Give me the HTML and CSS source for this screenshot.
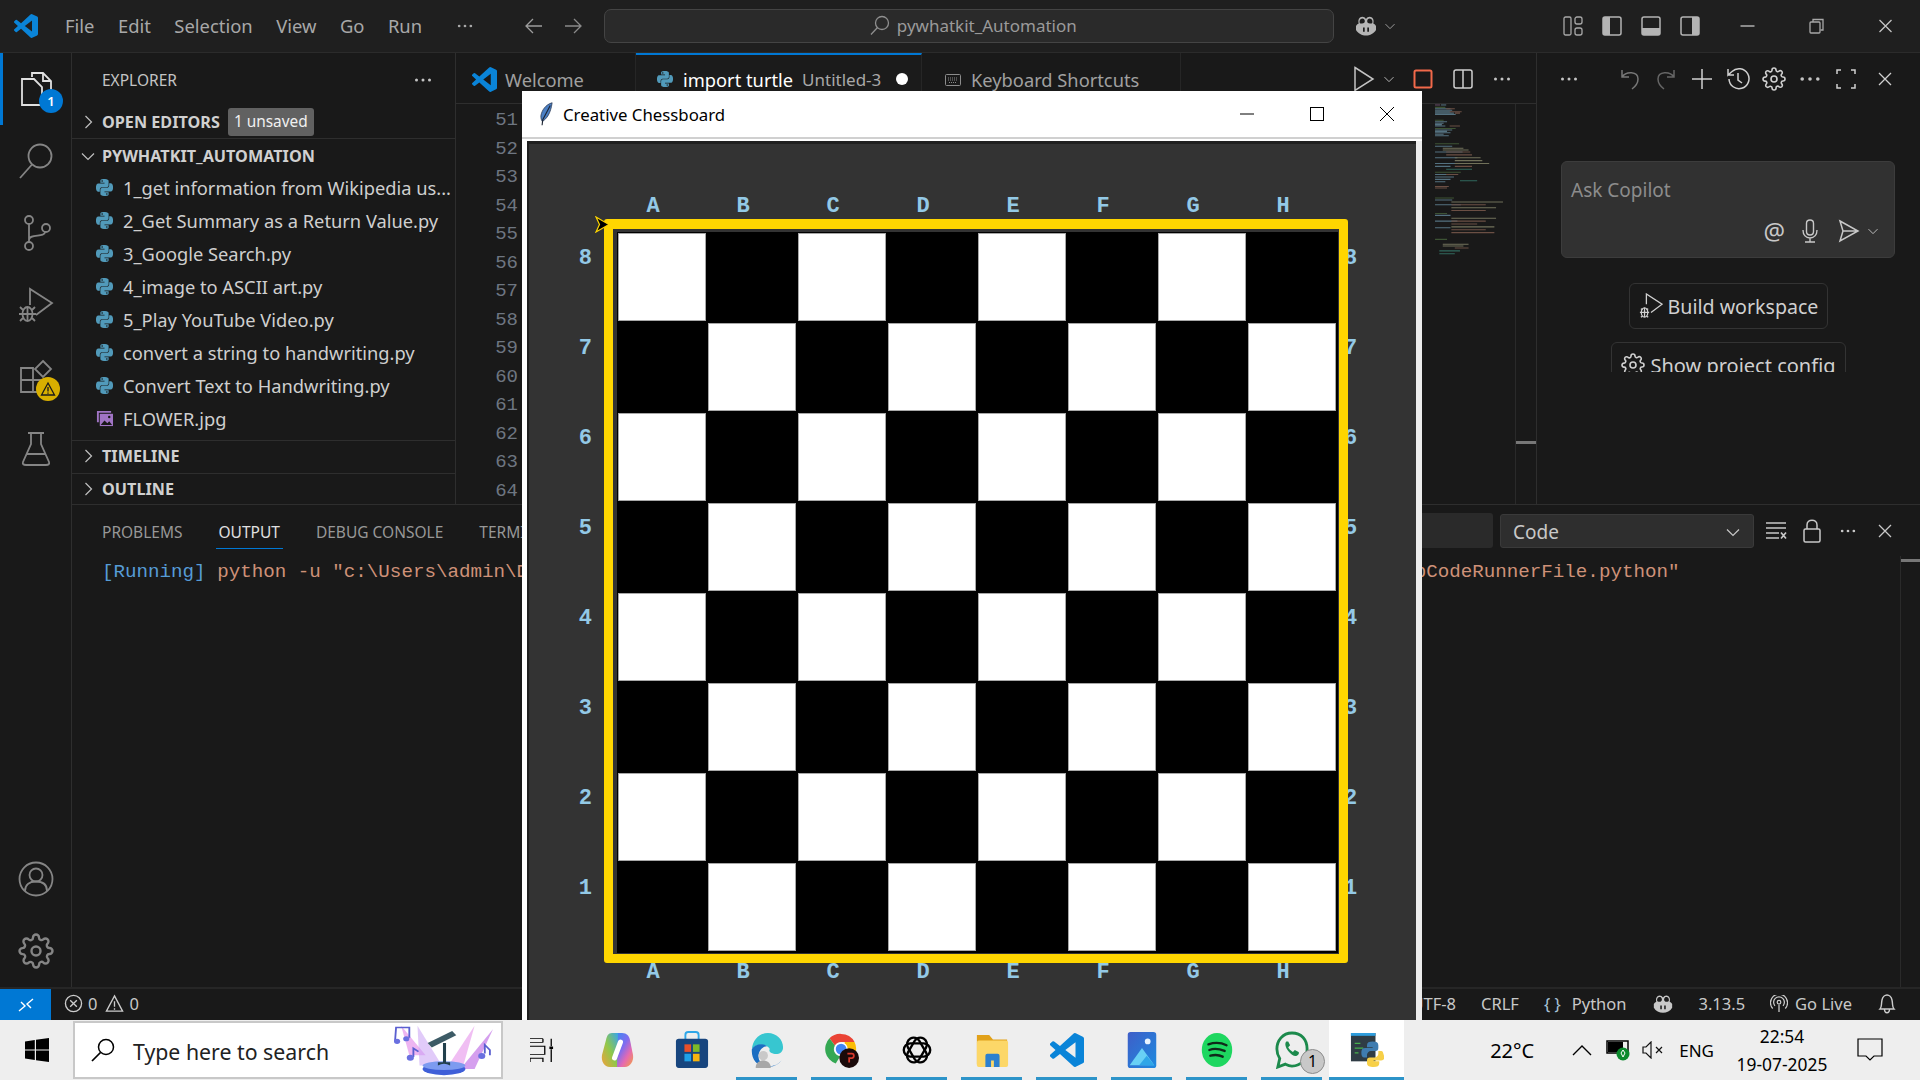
FILE: index.html
```html
<!DOCTYPE html>
<html lang="en">
<head>
  <meta charset="UTF-8" />
  <title>import turtle - pywhatkit_Automation</title>
  <link rel="stylesheet" href="styles.css">
</head>
<body>
  <svg class="defs" width="0" height="0">
    <symbol id="vscode" viewBox="0 0 24 24"><path fill="#0a84d8" d="M23.15 2.587L18.21.21a1.494 1.494 0 0 0-1.705.29l-9.46 8.63-4.12-3.128a.999.999 0 0 0-1.276.057L.327 7.261A1 1 0 0 0 .326 8.74L3.899 12 .326 15.26a1 1 0 0 0 .001 1.479L1.65 17.94a.999.999 0 0 0 1.276.057l4.12-3.128 9.46 8.63a1.492 1.492 0 0 0 1.704.29l4.942-2.377A1.5 1.5 0 0 0 24 20.06V3.939a1.5 1.5 0 0 0-.85-1.352zm-5.146 14.861L10.826 12l7.178-5.448v10.896z"/></symbol>
    <symbol id="python" viewBox="0 0 24 24"><path fill="#519aba" d="M14.25.18l.9.2.73.26.59.3.45.32.34.34.25.34.16.33.1.3.04.26.02.2-.01.13V8.5l-.05.63-.13.55-.21.46-.26.38-.3.31-.33.25-.35.19-.35.14-.33.1-.3.07-.26.04-.21.02H8.77l-.69.05-.59.14-.5.22-.41.27-.33.32-.27.35-.2.36-.15.37-.1.35-.07.32-.04.27-.02.21v3.06H3.17l-.21-.03-.28-.07-.32-.12-.35-.18-.36-.26-.36-.36-.35-.46-.32-.59-.28-.73-.21-.88-.14-1.05-.05-1.23.06-1.22.16-1.04.24-.87.32-.71.36-.57.4-.44.42-.33.42-.24.4-.16.36-.1.32-.05.24-.01h.16l.06.01h8.16v-.83H6.18l-.01-2.75-.02-.37.05-.34.11-.31.17-.28.25-.26.31-.23.38-.2.44-.18.51-.15.58-.12.64-.1.71-.06.77-.04.84-.02 1.27.05zm-6.3 1.98l-.23.33-.08.41.08.41.23.34.33.22.41.09.41-.09.33-.22.23-.34.08-.41-.08-.41-.23-.33-.33-.22-.41-.09-.41.09zm13.09 3.95l.28.06.32.12.35.18.36.27.36.35.35.47.32.59.28.73.21.88.14 1.04.05 1.23-.06 1.23-.16 1.04-.24.86-.32.71-.36.57-.4.45-.42.33-.42.24-.4.16-.36.09-.32.05-.24.02-.16-.01h-8.22v.82h5.84l.01 2.76.02.36-.05.34-.11.31-.17.29-.25.25-.31.24-.38.2-.44.17-.51.15-.58.13-.64.09-.71.07-.77.04-.84.01-1.27-.04-1.07-.14-.9-.2-.73-.25-.59-.3-.45-.33-.34-.34-.25-.34-.16-.33-.1-.3-.04-.25-.02-.2.01-.13v-5.34l.05-.64.13-.54.21-.46.26-.38.3-.32.33-.24.35-.2.35-.14.33-.1.3-.06.26-.04.21-.02.13-.01h5.84l.69-.05.59-.14.5-.21.41-.28.33-.32.27-.35.2-.36.15-.36.1-.35.07-.32.04-.28.02-.21V6.07h2.09l.14.01zm-6.47 14.25l-.23.33-.08.41.08.41.23.33.33.23.41.08.41-.08.33-.23.23-.33.08-.41-.08-.41-.23-.33-.33-.23-.41-.08-.41.08z"/></symbol>
    <symbol id="dots" viewBox="0 0 20 20"><g fill="currentColor"><circle cx="3.5" cy="10" r="1.5"/><circle cx="10" cy="10" r="1.5"/><circle cx="16.5" cy="10" r="1.5"/></g></symbol>
    <symbol id="chev-r" viewBox="0 0 16 16"><path d="M5.5 2l6 6-6 6" fill="none" stroke="currentColor" stroke-width="1.2"/></symbol>
    <symbol id="chev-d" viewBox="0 0 16 16"><path d="M2 5.5l6 6 6-6" fill="none" stroke="currentColor" stroke-width="1.2"/></symbol>
    <symbol id="close" viewBox="0 0 16 16"><path d="M2 2l12 12M14 2L2 14" fill="none" stroke="currentColor" stroke-width="1.3"/></symbol>
    <symbol id="gear" viewBox="0 0 24 24"><g fill="none" stroke="currentColor" stroke-width="1.6"><circle cx="12" cy="12" r="3"/><path d="M19.4 15a1.65 1.65 0 0 0 .33 1.82l.06.06a2 2 0 0 1 0 2.83 2 2 0 0 1-2.83 0l-.06-.06a1.65 1.65 0 0 0-1.82-.33 1.65 1.65 0 0 0-1 1.51V21a2 2 0 0 1-2 2 2 2 0 0 1-2-2v-.09A1.65 1.65 0 0 0 9 19.4a1.65 1.65 0 0 0-1.82.33l-.06.06a2 2 0 0 1-2.83 0 2 2 0 0 1 0-2.83l.06-.06a1.65 1.65 0 0 0 .33-1.82 1.65 1.65 0 0 0-1.51-1H3a2 2 0 0 1-2-2 2 2 0 0 1 2-2h.09A1.65 1.65 0 0 0 4.6 9a1.65 1.65 0 0 0-.33-1.82l-.06-.06a2 2 0 0 1 0-2.83 2 2 0 0 1 2.83 0l.06.06a1.65 1.65 0 0 0 1.82.33H9a1.65 1.65 0 0 0 1-1.51V3a2 2 0 0 1 2-2 2 2 0 0 1 2 2v.09a1.65 1.65 0 0 0 1 1.51 1.65 1.65 0 0 0 1.82-.33l.06-.06a2 2 0 0 1 2.83 0 2 2 0 0 1 0 2.83l-.06.06a1.65 1.65 0 0 0-.33 1.82V9a1.65 1.65 0 0 0 1.51 1H21a2 2 0 0 1 2 2 2 2 0 0 1-2 2h-.09a1.65 1.65 0 0 0-1.51 1z"/></g></symbol>
    <symbol id="copilot" viewBox="0 0 24 24"><path fill="currentColor" d="M6 3.5C8 2 10.500 2.500 12 5c1.500-2.500 4-3 6-1.500 1.800 1.400 1.900 4 1.300 6 1.300.6 2.200 1.500 2.700 2.500v4c-2 3.500-6 5.500-10 5.500S4 19.500 2 16v-4c.5-1 1.400-1.900 2.700-2.500C4.100 7.500 4.200 4.900 6 3.500z"/><path fill="#1c1c1c" d="M6.800 5c1.400-1 3.600-.6 4 1.800.2 1.700-.8 2.800-2.800 2.800-1.300 0-2-.3-2.300-.9C5.300 7.300 5.800 5.700 6.800 5zM17.200 5c-1.400-1-3.600-.6-4 1.800-.2 1.700.8 2.800 2.800 2.800 1.300 0 2-.3 2.300-.9.4-1.400-.1-3-1.100-3.700zM9 13.500h1.700v4.200H9zM13.300 13.500H15v4.200h-1.700z"/></symbol>
  </svg>

  <header class="titlebar">
    <div class="title-left">
      <svg class="logo"><use href="#vscode"/></svg>
      <nav class="menu">
        <span>File</span><span>Edit</span><span>Selection</span><span>View</span><span>Go</span><span>Run</span>
      </nav>
      <svg class="title-dots"><use href="#dots"/></svg>
      <svg class="arrow arrow-back" viewBox="0 0 20 20"><path d="M18 10H2M9 3l-7 7 7 7" fill="none" stroke="#9d9d9d" stroke-width="1.3"/></svg>
      <svg class="arrow" viewBox="0 0 20 20"><path d="M2 10h16M11 3l7 7-7 7" fill="none" stroke="#8a8a8a" stroke-width="1.3"/></svg>
    </div>
    <div class="command">
      <svg class="command-ic" viewBox="0 0 20 20"><circle cx="12" cy="8" r="6.500" fill="none" stroke="#8f8f8f" stroke-width="1.300"/><path d="M7.500 12.500L1 19.500" stroke="#8f8f8f" stroke-width="1.300"/></svg>
      <span>pywhatkit_Automation</span>
    </div>
    <svg class="title-copilot"><use href="#copilot"/></svg>
    <svg class="title-chev"><use href="#chev-d"/></svg>
    <div class="layouts">
      <svg viewBox="0 0 20 20"><g fill="none" stroke="#a8a8a8" stroke-width="1.300"><rect x="1" y="1" width="7" height="18" rx="1.500"/><rect x="12" y="1" width="7" height="7" rx="2"/><rect x="12" y="12" width="7" height="7" rx="2"/></g></svg>
      <svg viewBox="0 0 20 20"><rect x="1" y="1" width="18" height="18" rx="2" fill="none" stroke="#b4b4b4" stroke-width="1.500"/><rect x="1" y="1" width="7" height="18" fill="#b4b4b4"/></svg>
      <svg viewBox="0 0 20 20"><rect x="1" y="1" width="18" height="18" rx="2" fill="none" stroke="#b4b4b4" stroke-width="1.500"/><rect x="1" y="12" width="18" height="7" fill="#b4b4b4"/></svg>
      <svg viewBox="0 0 20 20"><rect x="1" y="1" width="18" height="18" rx="2" fill="none" stroke="#b4b4b4" stroke-width="1.500"/><rect x="12" y="1" width="7" height="18" fill="#b4b4b4"/></svg>
    </div>
    <div class="winctl">
      <svg viewBox="0 0 16 16"><path d="M1 8h14" stroke="#c4c4c4" stroke-width="1.300"/></svg>
      <svg viewBox="0 0 16 16"><path d="M4.500 4V1.500h10V12H12" fill="none" stroke="#a8a8a8" stroke-width="1.300"/><rect x="1.500" y="4" width="10" height="11" rx="1" fill="none" stroke="#a8a8a8" stroke-width="1.300"/></svg>
      <svg viewBox="0 0 16 16"><use href="#close" color="#c4c4c4"/></svg>
    </div>
  </header>

  <div class="workbench">
    <aside class="activity">
      <div class="act-top">
        <div class="act act-on">
          <svg viewBox="0 0 32 36"><g fill="none" stroke="#e0e0e0" stroke-width="1.800"><path d="M12 6V2h11l8 8v18H22"/><path d="M23 2v8h8"/><path d="M12 8H2v26h20V16l-8-8h-2z"/></g></svg>
          <span class="badge">1</span>
        </div>
        <div class="act"><svg viewBox="0 0 34 36"><g fill="none" stroke="#858585" stroke-width="1.800"><circle cx="21" cy="13" r="11.500"/><path d="M13 21.500L1 35"/></g></svg></div>
        <div class="act"><svg viewBox="0 0 32 36"><g fill="none" stroke="#858585" stroke-width="1.800"><circle cx="9" cy="5" r="4"/><circle cx="9" cy="31" r="4"/><circle cx="26" cy="13" r="4"/><path d="M9 9v18M9 25c0-7 16-2 16-8"/></g></svg></div>
        <div class="act"><svg viewBox="0 0 36 36"><g fill="none" stroke="#858585" stroke-width="1.800"><path d="M12 18V2l22 14-16 12"/><ellipse cx="9.500" cy="27" rx="5" ry="7"/><path d="M9.500 20v14M1 27h17M2 20l3 3M17 20l-3 3M2 34l3-3M17 34l-3-3"/></g></svg></div>
        <div class="act">
          <svg viewBox="0 0 34 36"><g fill="none" stroke="#858585" stroke-width="1.800"><path d="M2 9h12v24H2zM2 21h24v12H14"/><path d="M24 2l8 8-8 8-8-8z"/></g></svg>
          <span class="badge badge-warn"><svg viewBox="0 0 16 16"><path d="M8 2l6.500 12h-13z" fill="none" stroke="#1b1b1b" stroke-width="1.300"/><path d="M8 6v4.500M8 11.500v1.300" stroke="#1b1b1b" stroke-width="1.300"/></svg></span>
        </div>
        <div class="act"><svg viewBox="0 0 30 36"><path d="M7 2h16M10 2v11L2 31q-1 3 3 3h20q4 0 3-3L20 13V2M6 23h18" fill="none" stroke="#858585" stroke-width="1.800"/></svg></div>
      </div>
      <div class="act-bottom">
        <div class="act"><svg viewBox="0 0 36 36"><g fill="none" stroke="#858585" stroke-width="1.800"><circle cx="18" cy="18" r="16.500"/><circle cx="18" cy="14" r="6.500"/><path d="M7 30c0-7 5-9.500 11-9.500S29 23 29 30"/></g></svg></div>
        <div class="act"><svg class="act-gear"><use href="#gear"/></svg></div>
      </div>
    </aside>

    <div class="center">
      <div class="top-row">
        <section class="sidebar">
          <div class="side-head"><span>EXPLORER</span><svg><use href="#dots"/></svg></div>
          <div class="sec sec-open"><svg class="sec-chev"><use href="#chev-r"/></svg><b>OPEN EDITORS</b><span class="unsaved">1 unsaved</span></div>
          <div class="sec"><svg class="sec-chev"><use href="#chev-d"/></svg><b>PYWHATKIT_AUTOMATION</b></div>
          <ul class="files">
            <li><svg><use href="#python"/></svg><span>1_get information from Wikipedia us...</span></li>
            <li><svg><use href="#python"/></svg><span>2_Get Summary as a Return Value.py</span></li>
            <li><svg><use href="#python"/></svg><span>3_Google Search.py</span></li>
            <li><svg><use href="#python"/></svg><span>4_image to ASCII art.py</span></li>
            <li><svg><use href="#python"/></svg><span>5_Play YouTube Video.py</span></li>
            <li><svg><use href="#python"/></svg><span>convert a string to handwriting.py</span></li>
            <li><svg><use href="#python"/></svg><span>Convert Text to Handwriting.py</span></li>
            <li><svg viewBox="0 0 18 18"><path d="M1 1h15v2H3v10H1z" fill="#a074c4"/><rect x="4" y="4" width="14" height="13" fill="#a074c4"/><path d="M5 16l4-5 3 3 2-2 3 4z" fill="#181818"/><circle cx="14" cy="7.500" r="1.300" fill="#181818"/></svg><span>FLOWER.jpg</span></li>
          </ul>
          <div class="sec sec-line"><svg class="sec-chev"><use href="#chev-r"/></svg><b>TIMELINE</b></div>
          <div class="sec sec-line"><svg class="sec-chev"><use href="#chev-r"/></svg><b>OUTLINE</b></div>
        </section>

        <section class="editor">
          <div class="tabs">
            <div class="tab tab-welcome"><svg><use href="#vscode"/></svg><span>Welcome</span></div>
            <div class="tab tab-on"><svg><use href="#python"/></svg><span class="tab-name">import turtle</span><span class="tab-desc">Untitled-3</span><i class="tab-dot"></i></div>
            <div class="tab tab-keys"><svg viewBox="0 0 16 12"><rect x=".5" y=".5" width="15" height="11" rx="1" fill="none" stroke="#8c8c8c"/><path d="M3 4h10M3 6h10M4 8.500h8" stroke="#8c8c8c" stroke-dasharray="1 1"/></svg><span>Keyboard Shortcuts</span></div>
            <div class="tab-actions">
              <svg class="ta-play" viewBox="0 0 22 26"><path d="M2 1.500L20 13 2 24.500z" fill="none" stroke="#c4c4c4" stroke-width="1.500"/></svg>
              <svg class="ta-chev"><use href="#chev-d" color="#c4c4c4"/></svg>
              <svg class="ta-stop" viewBox="0 0 20 20"><rect x="1.500" y="1.500" width="17" height="17" rx="1.500" fill="none" stroke="#f1694a" stroke-width="2"/></svg>
              <svg class="ta-split" viewBox="0 0 20 20"><path d="M1 3q0-2 2-2h14q2 0 2 2v14q0 2-2 2H3q-2 0-2-2zM10 1v18" fill="none" stroke="#d0d0d0" stroke-width="1.500"/></svg>
              <svg class="ta-dots"><use href="#dots" color="#c4c4c4"/></svg>
            </div>
          </div>
          <div class="editor-body">
            <div class="gutter">
              <span>51</span><span>52</span><span>53</span><span>54</span><span>55</span><span>56</span><span>57</span><span>58</span><span>59</span><span>60</span><span>61</span><span>62</span><span>63</span><span>64</span>
            </div>
            <div class="code"></div>
            <svg class="minimap" viewBox="0 0 86 152">
              <g fill="none" stroke-width="2.200" opacity=".45" transform="scale(.86 .48)">
                <path stroke="#c586c0" d="M7 2h6"/><path stroke="#9cdcfe" d="M14 2h6"/>
                <path stroke="#6a9955" d="M7 7h12M7 34h10M7 51h24M7 83h28M7 142h30M7 196h22M7 228h14M7 282h14"/>
                <path stroke="#9cdcfe" d="M7 10h18M7 13h20M7 16h18M7 19h22M7 22h24M7 37h14M7 40h10M7 43h8M7 46h12M7 54h20M7 57h14M7 60h18M7 63h10M7 66h16M7 88h20M7 100h32M7 112h26M7 124h24M7 130h18M7 147h16M7 152h22M7 157h18M7 162h12M7 200h20M7 210h30M7 232h18M7 244h26M7 258h18"/>
                <path stroke="#ce9178" d="M20 10h10M24 16h14M30 19h6M24 46h12M20 100h28M20 106h30M30 130h20M20 147h14M7 172h16M7 175h14M26 210h40M26 222h40M26 244h40M26 250h30M26 262h40M26 268h50M30 300h16"/>
                <path stroke="#dcdcaa" d="M30 112h30M30 118h32M30 124h40M16 92h24M16 96h30M26 204h60M26 216h52M26 238h52M26 256h50M16 292h30M16 296h24"/>
                <path stroke="#4ec9b0" d="M20 136h30M36 160h20M12 306h24M12 312h18"/>
              </g>
            </svg>
            <div class="editor-scroll"><i></i></div>
          </div>
        </section>

        <section class="chat">
          <div class="chat-head">
            <svg class="chat-more"><use href="#dots"/></svg>
            <svg viewBox="0 0 24 24"><path d="M4 3v7h7M4 10c4-6 16-6 16 2 0 4-2 7-6 10" fill="none" stroke="#777" stroke-width="1.500"/></svg>
            <svg viewBox="0 0 24 24"><path d="M20 3v7h-7M20 10c-4-6-16-6-16 2 0 4 2 7 6 10" fill="none" stroke="#666" stroke-width="1.500"/></svg>
            <svg viewBox="0 0 24 24"><path d="M12 2v20M2 12h20" stroke="#d0d0d0" stroke-width="1.500"/></svg>
            <svg viewBox="0 0 24 24"><g fill="none" stroke="#d0d0d0" stroke-width="1.500"><path d="M3 12a10 10 0 1 0 3-7.500L2 8V2M2 8h6"/><path d="M12 6v7l4 3"/></g></svg>
            <svg><use href="#gear" color="#d0d0d0"/></svg>
            <svg><use href="#dots" color="#c4c4c4"/></svg>
            <svg viewBox="0 0 24 24"><path d="M7 3H3v4M17 3h4v4M7 21H3v-4M17 21h4v-4" fill="none" stroke="#d0d0d0" stroke-width="1.500"/></svg>
            <svg class="chat-close"><use href="#close" color="#d0d0d0"/></svg>
          </div>
          <div class="ask">
            <span class="ask-text">Ask Copilot</span>
            <div class="ask-tools">
              <span class="ask-at">@</span>
              <svg class="ask-mic" viewBox="0 0 16 24"><path d="M8 1c2.200 0 3.500 1.500 3.500 3.500v8c0 2-1.300 3.500-3.500 3.500s-3.500-1.500-3.500-3.500v-8C4.500 2.500 5.800 1 8 1zM1 11c0 5 3 8 7 8s7-3 7-8M8 19v4M3 23h10" fill="none" stroke="#c8c8c8" stroke-width="1.400"/></svg>
              <svg class="ask-send" viewBox="0 0 22 24"><path d="M2 2l18 10L2 22l3-10zM5 12h15" fill="none" stroke="#c8c8c8" stroke-width="1.500"/></svg>
              <svg class="ask-chev"><use href="#chev-d" color="#c8c8c8"/></svg>
            </div>
          </div>
          <div class="chat-actions">
            <div class="pill pill-build">
              <svg viewBox="0 0 26 28"><g fill="none" stroke="#d0d0d0" stroke-width="1.400"><path d="M8 12V1l17 11-12 9"/><ellipse cx="6" cy="21" rx="3.500" ry="5"/><path d="M6 16v10M1 21h10M2 17l2 1M10 17l-2 1M2 26l2-1M10 26l-2-1"/></g></svg>
              <span>Build workspace</span>
            </div>
            <div class="pill pill-config"><svg><use href="#gear" color="#d0d0d0"/></svg><span>Show project config</span></div>
          </div>
        </section>
      </div>

      <section class="panel">
        <div class="panel-head">
          <div class="panel-tabs">
            <span>PROBLEMS</span><span class="panel-on">OUTPUT</span><span>DEBUG CONSOLE</span><span>TERMINAL</span>
          </div>
          <div class="filter"></div>
          <div class="select"><span>Code</span><svg><use href="#chev-d"/></svg></div>
          <svg class="p-clear" viewBox="0 0 22 20"><path d="M1 2h20M1 7h20M1 12h13M1 17h13" stroke="#c8c8c8" stroke-width="1.400"/><path d="M16 11.500l5 6M21 11.500l-5 6" stroke="#c8c8c8" stroke-width="1.700"/></svg>
          <svg class="p-lock" viewBox="0 0 18 24"><g fill="none" stroke="#c8c8c8" stroke-width="1.500"><rect x="1" y="10" width="16" height="13" rx="1.500"/><path d="M4 10V6c0-6.500 10-6.500 10 0v4"/></g></svg>
          <svg class="p-dots"><use href="#dots" color="#c8c8c8"/></svg>
          <svg class="p-close"><use href="#close" color="#c8c8c8"/></svg>
        </div>
        <div class="panel-body">
          <div class="output"><span class="out-run">[Running]</span> python -u "c:\Users\admin\Desktop\Python Projects\Automation Scripts\Practice 1\pywhatkit_Automation\tempCodeRunnerFile.python"</div>
          <div class="panel-scroll"><i></i></div>
        </div>
      </section>
    </div>
  </div>

  <footer class="statusbar">
    <div class="remote"><svg viewBox="0 0 16 16"><path d="M1 14l6-5-4-4M15 2L9 7l4 4" fill="none" stroke="#fff" stroke-width="1.400"/></svg></div>
    <div class="problems">
      <svg viewBox="0 0 20 20"><circle cx="10" cy="10" r="8.500" fill="none" stroke="#ccc" stroke-width="1.400"/><path d="M6.500 6.500l7 7M13.500 6.500l-7 7" stroke="#ccc" stroke-width="1.400"/></svg><span>0</span>
      <svg viewBox="0 0 20 20"><path d="M10 2l8.500 16h-17z" fill="none" stroke="#ccc" stroke-width="1.400"/><path d="M10 7.500v6M10 15v1.500" stroke="#ccc" stroke-width="1.400"/></svg><span>0</span>
    </div>
    <div class="status-right">
      <span>UTF-8</span>
      <span>CRLF</span>
      <span class="st-lang"><em>{ }</em>Python</span>
      <svg class="st-copilot"><use href="#copilot"/></svg>
      <span>3.13.5</span>
      <span class="st-live"><svg viewBox="0 0 20 20"><g fill="none" stroke="#ccc" stroke-width="1.400"><circle cx="10" cy="8" r="2"/><path d="M5.500 12a6 6 0 1 1 9 0M3 15a9.500 9.500 0 1 1 14 0M10 11v8"/></g></svg>Go Live</span>
      <svg class="st-bell" viewBox="0 0 20 22"><path d="M3 16c2-2 1-4 2-9 .6-3 3-5 5-5s4.400 2 5 5c1 5 0 7 2 9zM7.500 16c0 5 5 5 5 0" fill="none" stroke="#ccc" stroke-width="1.400"/></svg>
    </div>
  </footer>

  <div class="tkwin">
    <div class="tk-title">
      <svg class="tk-feather" viewBox="0 0 16 26"><path d="M14 1C7 3 3 9 2 15c0 3 .5 4.500 1.500 6 5-3 9-9 10.500-20z" fill="#4a7fc4" stroke="#26344e" stroke-width=".8"/><path d="M12 4L4 19l-.7 6" fill="none" stroke="#1c2433" stroke-width="1.200"/></svg>
      <span class="tk-name">Creative Chessboard</span>
      <div class="tk-ctl">
        <svg viewBox="0 0 16 16"><path d="M1 8h14" stroke="#000" stroke-width="1"/></svg>
        <svg viewBox="0 0 16 16"><rect x="1.500" y="1.500" width="13" height="13" fill="none" stroke="#000" stroke-width="1"/></svg>
        <svg viewBox="0 0 16 16"><path d="M1 1l14 14M15 1L1 15" fill="none" stroke="#000" stroke-width="1"/></svg>
      </div>
    </div>
    <div class="tk-canvas">
      <div class="files-row files-top"><span>A</span><span>B</span><span>C</span><span>D</span><span>E</span><span>F</span><span>G</span><span>H</span></div>
      <div class="ranks ranks-left"><span>8</span><span>7</span><span>6</span><span>5</span><span>4</span><span>3</span><span>2</span><span>1</span></div>
      <div class="board">
        <div class="squares">
          <i class="w"></i><i></i><i class="w"></i><i></i><i class="w"></i><i></i><i class="w"></i><i></i>
          <i></i><i class="w"></i><i></i><i class="w"></i><i></i><i class="w"></i><i></i><i class="w"></i>
          <i class="w"></i><i></i><i class="w"></i><i></i><i class="w"></i><i></i><i class="w"></i><i></i>
          <i></i><i class="w"></i><i></i><i class="w"></i><i></i><i class="w"></i><i></i><i class="w"></i>
          <i class="w"></i><i></i><i class="w"></i><i></i><i class="w"></i><i></i><i class="w"></i><i></i>
          <i></i><i class="w"></i><i></i><i class="w"></i><i></i><i class="w"></i><i></i><i class="w"></i>
          <i class="w"></i><i></i><i class="w"></i><i></i><i class="w"></i><i></i><i class="w"></i><i></i>
          <i></i><i class="w"></i><i></i><i class="w"></i><i></i><i class="w"></i><i></i><i class="w"></i>
        </div>
        <svg class="turtle" viewBox="0 0 15 17"><path d="M1 1l13 7.500L1 16l3.500-7.500z" fill="#000" stroke="#ffd600" stroke-width="1.200"/></svg>
      </div>
      <div class="ranks ranks-right"><span>8</span><span>7</span><span>6</span><span>5</span><span>4</span><span>3</span><span>2</span><span>1</span></div>
      <div class="files-row files-bottom"><span>A</span><span>B</span><span>C</span><span>D</span><span>E</span><span>F</span><span>G</span><span>H</span></div>
    </div>
  </div>

  <div class="taskbar">
    <div class="start"><svg viewBox="0 0 24 24"><path fill="#000" d="M0 3.400l9.800-1.400v9.500H0zM11 1.800L24 0v11.500H11zM0 12.500h9.800V22L0 20.600zM11 12.500h13V24l-13-1.800z"/></svg></div>
    <div class="tb-search">
      <svg class="tb-lens" viewBox="0 0 24 24"><circle cx="15" cy="9" r="7.500" fill="none" stroke="#000" stroke-width="1.500"/><path d="M9.500 14.500L1 23" stroke="#000" stroke-width="1.700"/></svg>
      <span>Type here to search</span>
      <svg class="doodle" viewBox="0 0 100 60" preserveAspectRatio="none">
        <g fill="#e9a2ee"><path d="M8 2l24 34H16z" opacity=".8"/><path d="M24 2l24 46H26z" opacity=".55" fill="#c9a0f4"/><path d="M80 2l-12 50H52z" opacity=".7"/><path d="M98 6L66 52h14z" opacity=".75" fill="#c77fe8"/></g>
        <ellipse cx="50" cy="52" rx="21" ry="7" fill="#3f5fd8"/><ellipse cx="50" cy="48" rx="21" ry="5" fill="#7d9bf0"/>
        <path d="M44 48q6-4 12 0v-4H44zM49 44V22h3v22z" fill="#22404c"/><path d="M34 22L58 8l4 5-24 14z" fill="#3d5b66"/>
        <path d="M2 20l1-16h13v12" fill="none" stroke="#5a5fd0" stroke-width="1.800"/><circle cx="4" cy="20" r="3" fill="#6a70e0"/><circle cx="13" cy="17" r="3" fill="#6a70e0"/>
        <path d="M20 38V28l5 4" fill="none" stroke="#5a5fd0" stroke-width="1.800"/><circle cx="17" cy="39" r="3.500" fill="#6a70e0"/>
        <path d="M90 34V24l5 6v6" fill="none" stroke="#5a5fd0" stroke-width="1.800"/><circle cx="87" cy="37" r="3.500" fill="#6a70e0"/>
      </svg>
    </div>
    <div class="apps">
      <div class="app app-plain"><svg viewBox="0 0 26 38" preserveAspectRatio="none"><path d="M0 1h14M14 1v6M0 7h14M0 13h16v13H0M0 32h14v6M0 32v6M23 1v12M23 18v20" fill="none" stroke="#000" stroke-width="1.400"/><rect x="21" y="13.500" width="4" height="4" fill="#000"/></svg></div>
      <div class="app">
        <svg viewBox="0 0 34 36">
          <defs><linearGradient id="cp" x1="0" y1="0" x2="1" y2="1"><stop offset="0" stop-color="#2f8ff0"/><stop offset=".45" stop-color="#7f6cf0"/><stop offset=".7" stop-color="#e66ab0"/><stop offset="1" stop-color="#f4a23c"/></linearGradient><linearGradient id="cp2" x1="0" y1="1" x2="1" y2="0"><stop offset="0" stop-color="#f3a03a"/><stop offset=".5" stop-color="#8fc84b"/><stop offset="1" stop-color="#38a6e8"/></linearGradient></defs>
          <path d="M13 1h9c5 0 7 3 8 7l3 15c1 6-3 12-8 12h-8z" fill="url(#cp)"/>
          <path d="M18 1H12C8 1 7 4 6 8L2 23c-1 6 2 12 8 12h7z" fill="url(#cp2)"/>
          <path d="M20.500 10L14.500 26" stroke="#fff" stroke-width="5" stroke-linecap="round"/>
        </svg>
      </div>
      <div class="app">
        <svg viewBox="0 0 36 40"><path d="M11 9V4q0-3 3-3h8q3 0 3 3v5" fill="none" stroke="#2ea6e8" stroke-width="2"/><rect x="1" y="8" width="34" height="31" rx="3" fill="#17457e"/><rect x="10" y="14" width="7" height="8" fill="#e8502a"/><rect x="19" y="14" width="7" height="8" fill="#7db928"/><rect x="10" y="24" width="7" height="8" fill="#1ea1e8"/><rect x="19" y="24" width="7" height="8" fill="#f6b40e"/></svg>
      </div>
      <div class="app app-edge">
        <svg viewBox="0 0 36 38"><path d="M2 18C3 8 10 1 19 1c9 0 16 7 16 15 0 6-5 8-10 7s-5-4-4-5c-3-5-12-6-17-2-1 1-2 1-2 2z" fill="#37c6d0"/><path d="M2 18c3-5 11-7 16-3-5 0-9 5-9 11 0 5 4 9 9 10 6 1 13-2 16-7-3 5-9 8-16 8C8 37 1 29 2 18z" fill="#1b6ec2"/><circle cx="14" cy="25" r="5" fill="#c9c9c9"/><path d="M6 38c0-6 4-8 8-8s8 2 8 8z" fill="#a8a8a8"/></svg>
      </div>
      <div class="app app-chrome">
        <svg viewBox="0 0 38 40"><path d="M18 2a17 17 0 0 1 15 9H18a8 8 0 0 0-7 4L5 7a17 17 0 0 1 13-5z" fill="#ea4335"/><path d="M5 7l6 8a8 8 0 0 0 6 12l-5 8A17 17 0 0 1 5 7z" fill="#34a853"/><path d="M33 11a17 17 0 0 1 0 15H22V11z" fill="#fbbc04"/><circle cx="18" cy="19" r="7.500" fill="#fff"/><circle cx="18" cy="19" r="6" fill="#4285f4"/><circle cx="27" cy="29" r="11" fill="#1a0a0a"/><path d="M25 24h5c3 0 3 5 0 5h-3v5" fill="none" stroke="#d8382c" stroke-width="2"/></svg>
      </div>
      <div class="app app-gpt">
        <svg viewBox="0 0 36 36"><g fill="none" stroke="#000" stroke-width="2.500"><rect x="4" y="11" width="28" height="14" rx="7"/><rect x="4" y="11" width="28" height="14" rx="7" transform="rotate(60 18 18)"/><rect x="4" y="11" width="28" height="14" rx="7" transform="rotate(120 18 18)"/></g></svg>
      </div>
      <div class="app">
        <svg viewBox="0 0 36 38"><path d="M2 3h13l4 5h15v26H2z" fill="#e1a11a"/><rect x="2" y="9" width="33" height="28" rx="2" fill="#fcd768"/><path d="M11 37V25q0-2 2-2h11q2 0 2 2v12h-6v-7h-3v7z" fill="#2c80cf"/></svg>
      </div>
      <div class="app"><svg viewBox="0 0 24 24"><use href="#vscode"/></svg></div>
      <div class="app">
        <svg viewBox="0 0 32 40"><defs><linearGradient id="ph" x1="0" y1="0" x2="1" y2="1"><stop offset="0" stop-color="#3f5ec8"/><stop offset="1" stop-color="#1d8adf"/></linearGradient></defs><rect x="1" y="1" width="30" height="38" rx="3" fill="url(#ph)"/><circle cx="22" cy="11" r="3" fill="#e8f4ff"/><path d="M3 36l13-18 13 18z" fill="#68d0f5"/><path d="M13 36l8-10 8 10z" fill="#2ea6e8"/></svg>
      </div>
      <div class="app">
        <svg viewBox="0 0 34 40"><ellipse cx="17" cy="20" rx="16" ry="18" fill="#1ed760"/><g fill="none" stroke="#10281a" stroke-width="2.500" stroke-linecap="round"><path d="M8 14c6-2 13-2 19 1"/><path d="M9 20c5-2 11-1 16 1"/><path d="M10 26c4-1 9-1 13 1"/></g></svg>
      </div>
      <div class="app app-wa">
        <svg viewBox="0 0 36 40"><path d="M18 2C8 2 2 10 2 19c0 4 1 7 3 10L3 38l8-3c2 1 5 2 7 2 10 0 16-8 16-18S28 2 18 2z" fill="none" stroke="#1c8a4c" stroke-width="3"/><path d="M12 11c-2 2-1 6 2 10s7 6 9 5 3-3 2-4l-4-2-2 2c-2-1-4-3-5-5l2-2-2-4z" fill="#1c8a4c"/></svg>
        <span class="wa-count">1</span>
      </div>
      <div class="app app-active">
        <svg viewBox="0 0 36 38"><rect x="1" y="1" width="26" height="30" fill="#2f3c45"/><rect x="1" y="1" width="26" height="3" fill="#2f9ddd"/><path d="M5 12h6M5 17h9M5 22h4" stroke="#46b04c" stroke-width="1.500"/><path d="M24 10c-4 0-6 1-6 4v2h6v1h-8c-3 0-4 2-4 5s1 5 3 5h3v-3c0-2 2-4 4-4h5c2 0 3-1 3-3v-3c0-3-2-4-6-4z" fill="#3f7cb0"/><path d="M25 37c4 0 6-1 6-4v-2h-6v-1h8c3 0 4-2 3-5s-1-5-3-5h-3v3c0 2-2 4-4 4h-5c-2 0-3 1-3 3v3c0 3 3 4 7 4z" fill="#f7d048"/></svg>
      </div>
    </div>
    <div class="tray">
      <span class="temp">22°C</span>
      <svg class="tr-chev" viewBox="0 0 20 12"><path d="M1 11l9-9 9 9" fill="none" stroke="#000" stroke-width="1.400"/></svg>
      <svg class="tr-batt" viewBox="0 0 26 22"><rect x="1" y="2" width="21" height="12" fill="none" stroke="#000" stroke-width="1.500"/><rect x="2" y="3" width="15" height="10" fill="#000"/><circle cx="17" cy="15" r="6.500" fill="#0c8a2d"/><path d="M17 11l2 3-2 4-2-4z" fill="none" stroke="#fff"/></svg>
      <svg class="tr-vol" viewBox="0 0 22 18"><path d="M1 6h3l5-5v16l-5-5H1z" fill="none" stroke="#111" stroke-width="1.200"/><path d="M14 6l6 6M20 6l-6 6" stroke="#111" stroke-width="1.200"/></svg>
      <span class="lang">ENG</span>
      <div class="clock"><span>22:54</span><span>19-07-2025</span></div>
      <svg class="tr-note" viewBox="0 0 26 24"><path d="M1 1h24v17H17l-4 4-4-4H1z" fill="none" stroke="#000" stroke-width="1.200"/></svg>
    </div>
  </div>
</body>
</html>
```

FILE: styles.css
```css
:root {
  --bg: #191919;
  --bar: #1f1f1f;
  --line: #2e2e2e;
  --text: #cccccc;
  --muted: #9a9a9a;
  --blue: #0078d4;
  --ui: "Noto Sans", "Open Sans", sans-serif;
  --mono: "Liberation Mono", "DejaVu Sans Mono", monospace;
}

* {
  box-sizing: border-box;
}

html, body {
  margin: 0;
  height: 100%;
}

body {
  width: 1920px;
  height: 1080px;
  overflow: hidden;
  position: relative;
  display: flex;
  flex-direction: column;
  font-family: var(--ui);
  font-size: 18px;
  color: var(--text);
  background: var(--bg);
}

svg {
  display: block;
  flex: none;
}

.defs {
  position: absolute;
}

/* title bar */
.titlebar {
  height: 53px;
  flex: none;
  display: flex;
  align-items: center;
  background: var(--bar);
  border-bottom: 1px solid #2b2b2b;
}

.title-left {
  width: 604px;
  display: flex;
  align-items: center;
}

.logo {
  width: 24px;
  height: 24px;
  margin: 0 27px 0 14px;
}

.menu {
  width: 391px;
  display: flex;
  gap: 23.500px;
  color: #a8a8a8;
  font-size: 18.400px;
  padding-bottom: 2px;
}

.title-dots {
  width: 18px;
  height: 18px;
  color: #a8a8a8;
}

.arrow {
  width: 20px;
  height: 20px;
  margin-left: 19px;
}

.arrow-back {
  margin-left: 50px;
}

.command {
  width: 731px;
  height: 34px;
  display: flex;
  align-items: center;
  justify-content: center;
  gap: 7px;
  padding: 0 0 2px 9px;
  background: #2a2a2a;
  border: 1px solid #444444;
  border-radius: 7px;
  color: #9a9a9a;
  font-size: 17px;
}

.command-ic {
  width: 20px;
  height: 20px;
}

.title-copilot {
  width: 24px;
  height: 24px;
  margin-left: 20px;
  color: #b5b5b5;
}

.title-chev {
  width: 12px;
  height: 12px;
  margin-left: 6px;
  color: #a8a8a8;
}

.layouts {
  display: flex;
  gap: 19px;
  margin-left: 167px;
}

.layouts svg {
  width: 20px;
  height: 20px;
}

.winctl {
  display: flex;
  margin-left: 13px;
}

.winctl svg {
  width: 69px;
  height: 16px;
}

/* activity bar */
.workbench {
  flex: 1;
  min-height: 0;
  display: flex;
}

.activity {
  width: 72px;
  flex: none;
  display: flex;
  flex-direction: column;
  justify-content: space-between;
  border-right: 1px solid var(--line);
}

.act {
  position: relative;
  height: 72px;
  display: flex;
  align-items: center;
  justify-content: center;
}

.act > svg {
  width: 36px;
  height: 36px;
}

.act-on {
  border-left: 3px solid var(--blue);
  padding-right: 3px;
}

.act-gear {
  color: #858585;
}

.badge {
  position: absolute;
  left: 36px;
  top: 36px;
  width: 24px;
  height: 24px;
  border-radius: 50%;
  background: var(--blue);
  color: #fff;
  font-size: 13px;
  font-weight: 600;
  display: flex;
  align-items: center;
  justify-content: center;
}

.badge-warn {
  background: #d9af00;
}

.badge-warn svg {
  width: 16px;
  height: 16px;
}

/* layout of the middle */
.center {
  flex: 1;
  min-width: 0;
  display: flex;
  flex-direction: column;
}

.top-row {
  height: 452px;
  flex: none;
  display: flex;
  border-bottom: 1px solid var(--line);
}

/* explorer */
.sidebar {
  width: 384px;
  flex: none;
  border-right: 1px solid var(--line);
  display: flex;
  flex-direction: column;
}

.side-head {
  height: 51px;
  flex: none;
  display: flex;
  align-items: center;
  justify-content: space-between;
  padding: 2px 22px 0 30px;
  font-size: 15.500px;
  color: #c4c4c4;
}

.side-head svg {
  width: 20px;
  height: 20px;
}

.sec {
  height: 33px;
  flex: none;
  display: flex;
  align-items: center;
  padding-left: 8px;
  font-size: 16.200px;
  color: #d0d0d0;
}

.sec b {
  font-weight: 700;
}

.sec-chev {
  width: 16px;
  height: 16px;
  margin-right: 6px;
  color: #c0c0c0;
}

.sec-open {
  height: 35px;
  padding-top: 2px;
  border-bottom: 1px solid var(--line);
}

.sec-line {
  padding-bottom: 2px;
  border-top: 1px solid var(--line);
}

.unsaved {
  margin-left: 8px;
  padding: 0 6px;
  height: 28px;
  line-height: 27px;
  background: #616161;
  border-radius: 3px;
  color: #f0f0f0;
  font-size: 15.400px;
}

.files {
  list-style: none;
  margin: 0;
  padding: 0;
  height: 268px;
  flex: none;
}

.files li {
  height: 33px;
  display: flex;
  align-items: center;
  padding: 0 0 2px 24px;
  font-size: 18.300px;
  color: #cfcfcf;
  white-space: nowrap;
}

.files svg {
  width: 17px;
  height: 17px;
  margin-right: 10px;
}

/* editor */
.editor {
  width: 1081px;
  flex: none;
  display: flex;
  flex-direction: column;
  border-right: 1px solid var(--line);
}

.tabs {
  height: 51px;
  flex: none;
  display: flex;
  border-bottom: 1px solid var(--line);
}

.tab {
  height: 50px;
  display: flex;
  align-items: center;
  color: #a0a0a0;
  font-size: 18.300px;
  border-right: 1px solid #262626;
  white-space: nowrap;
  padding-top: 3px;
}

.tab-welcome {
  width: 180px;
  padding-left: 16px;
}

.tab-welcome svg {
  width: 25px;
  height: 25px;
  margin-right: 8px;
}

.tab-on {
  width: 286px;
  padding-left: 21px;
  padding-top: 0;
  background: #1b1b1b;
  border-top: 2px solid var(--blue);
  color: #fff;
}

.tab-on svg {
  width: 16px;
  height: 16px;
  margin-right: 10px;
}

.tab-name {
  margin-right: 9px;
}

.tab-desc {
  font-size: 17px;
  color: #a8a8a8;
}

.tab-dot {
  width: 12px;
  height: 12px;
  margin-left: 15px;
  border-radius: 50%;
  background: #fff;
}

.tab-keys {
  width: 259px;
  padding-left: 23px;
}

.tab-keys svg {
  width: 16px;
  height: 12px;
  margin-right: 10px;
}

.tab-actions {
  flex: 1;
  display: flex;
  align-items: center;
  justify-content: flex-end;
  padding: 1px 24px 0 0;
}

.ta-play {
  width: 22px;
  height: 26px;
}

.ta-chev {
  width: 12px;
  height: 12px;
  margin-left: 8px;
}

.ta-stop {
  width: 20px;
  height: 20px;
  margin-left: 18px;
}

.ta-split {
  width: 20px;
  height: 20px;
  margin-left: 20px;
}

.ta-dots {
  width: 20px;
  height: 20px;
  margin-left: 19px;
}

.editor-body {
  flex: 1;
  min-height: 0;
  display: flex;
}

.gutter {
  width: 62px;
  flex: none;
  padding-top: 2px;
  display: flex;
  flex-direction: column;
  text-align: right;
  font-family: var(--mono);
  font-size: 19px;
  line-height: 28.500px;
  color: #6e7681;
}

.code {
  flex: 1;
}

.minimap {
  width: 86px;
  height: 152px;
}

.editor-scroll {
  width: 21px;
  flex: none;
  border-left: 1px solid #2a2a2a;
  padding-top: 337px;
}

.editor-scroll i {
  display: block;
  height: 3px;
  background: #777777;
}

/* copilot chat */
.chat {
  flex: 1;
  min-width: 0;
  display: flex;
  flex-direction: column;
}

.chat-head {
  height: 51px;
  flex: none;
  display: flex;
  align-items: center;
  gap: 12px;
  padding: 0 0 0 22px;
}

.chat-head svg {
  width: 24px;
  height: 24px;
}

.chat-head .chat-more {
  width: 20px;
  height: 20px;
  margin-right: 27px;
  color: #c4c4c4;
}

.chat-head .chat-close {
  width: 16px;
  height: 16px;
  margin-left: 7px;
}

.ask {
  width: 334px;
  height: 97px;
  margin: 57px 0 0 24px;
  padding: 15px 9px 14px;
  flex: none;
  display: flex;
  flex-direction: column;
  justify-content: space-between;
  background: #313131;
  border: 1px solid #3c3c3c;
  border-radius: 6px;
}

.ask-text {
  color: #8c8c8c;
  font-size: 19px;
}

.ask-tools {
  display: flex;
  align-items: center;
  justify-content: flex-end;
}

.ask-at {
  font-size: 24px;
  line-height: 24px;
  color: #c8c8c8;
}

.ask-mic {
  width: 16px;
  height: 24px;
  margin-left: 17px;
}

.ask-send {
  width: 22px;
  height: 24px;
  margin-left: 20px;
}

.ask-chev {
  width: 12px;
  height: 12px;
  margin: 0 6px 0 7px;
}

.chat-actions {
  margin-top: 25px;
  height: 89px;
  overflow: hidden;
  display: flex;
  flex-direction: column;
  align-items: center;
  gap: 13px;
}

.pill {
  height: 46px;
  flex: none;
  display: flex;
  align-items: center;
  justify-content: center;
  border: 1px solid #333333;
  border-radius: 6px;
  font-size: 20px;
  color: #d0d0d0;
  white-space: nowrap;
}

.pill-build {
  width: 199px;
  font-size: 19.600px;
}

.pill-config {
  width: 235px;
}

.pill svg {
  width: 24px;
  height: 26px;
  margin-right: 5px;
}

/* output panel */
.panel {
  flex: 1;
  min-height: 0;
  display: flex;
  flex-direction: column;
}

.panel-head {
  height: 51px;
  flex: none;
  display: flex;
  align-items: center;
  padding-right: 27px;
}

.panel-tabs {
  flex: 1;
  display: flex;
  gap: 30px;
  padding-left: 27px;
  font-size: 15.500px;
  color: #979797;
  white-space: nowrap;
}

.panel-tabs span {
  height: 37px;
  padding: 10px 3px 0;
  line-height: 20px;
}

.panel-tabs .panel-on {
  color: #e0e0e0;
  border-bottom: 1px solid var(--blue);
}

.filter {
  width: 120px;
  height: 35px;
  background: #2a2a2a;
  border-radius: 3px;
}

.select {
  width: 254px;
  height: 34px;
  margin-left: 7px;
  padding: 3px 12px 0;
  display: flex;
  align-items: center;
  justify-content: space-between;
  background: #2e2e2e;
  border: 1px solid #3a3a3a;
  border-radius: 3px;
  font-size: 19px;
  color: #c8c8c8;
}

.select svg {
  width: 16px;
  height: 16px;
}

.p-clear {
  width: 22px;
  height: 20px;
  margin-left: 11px;
}

.p-lock {
  width: 18px;
  height: 24px;
  margin-left: 16px;
}

.p-dots {
  width: 18px;
  height: 18px;
  margin-left: 18px;
}

.p-close {
  width: 16px;
  height: 16px;
  margin-left: 20px;
}

.panel-body {
  flex: 1;
  min-height: 0;
  display: flex;
}

.output {
  flex: 1;
  min-width: 0;
  padding: 2px 0 0 30px;
  font-family: var(--mono);
  font-size: 19.200px;
  line-height: 28px;
  color: #ce9178;
  white-space: nowrap;
}

.out-run {
  color: #569cd6;
}

.panel-scroll {
  width: 20px;
  flex: none;
  border-left: 1px solid #2a2a2a;
  padding-top: 3px;
}

.panel-scroll i {
  display: block;
  height: 3px;
  background: #777777;
}

/* status bar */
.statusbar {
  height: 33px;
  flex: none;
  display: flex;
  align-items: center;
  border-top: 2px solid #262626;
  background: var(--bg);
  font-size: 16.500px;
  color: #c8c8c8;
  white-space: nowrap;
}

.remote {
  width: 51px;
  height: 31px;
  background: var(--blue);
  display: flex;
  align-items: center;
  justify-content: center;
}

.remote svg {
  width: 16px;
  height: 16px;
}

.problems {
  display: flex;
  align-items: center;
  gap: 5px;
  margin-left: 13px;
  padding-bottom: 2px;
}

.problems svg {
  width: 19px;
  height: 19px;
}

.problems span + svg {
  margin-left: 3px;
}

.status-right {
  margin-left: auto;
  display: flex;
  align-items: center;
  gap: 25px;
  padding: 0 23px 2px 0;
}

.st-lang em {
  font-style: normal;
  margin-right: 11px;
  color: #a9c4d8;
}

.st-copilot {
  width: 22px;
  height: 22px;
  color: #c8c8c8;
}

.st-live {
  display: flex;
  align-items: center;
  gap: 7px;
}

.st-live svg {
  width: 18px;
  height: 18px;
}

.st-bell {
  width: 20px;
  height: 22px;
}

/* the turtle window floats over the editor */
.tkwin {
  position: absolute;
  left: 522px;
  top: 91px;
  width: 900px;
  height: 929px;
  display: flex;
  flex-direction: column;
  background: #ffffff;
  color: #000000;
}

.tk-title {
  height: 48px;
  flex: none;
  display: flex;
  align-items: center;
  padding-left: 17px;
  border-bottom: 2px solid #d0d0d0;
}

.tk-feather {
  width: 15px;
  height: 26px;
  margin-right: 9px;
}

.tk-name {
  font-size: 16.800px;
}

.tk-ctl {
  margin-left: auto;
  display: flex;
  gap: 54px;
  padding-right: 27px;
}

.tk-ctl svg {
  width: 16px;
  height: 16px;
}

.tk-canvas {
  flex: 1;
  min-height: 0;
  display: grid;
  grid-template-columns: 75px 744px 1fr;
  grid-template-rows: 75px 744px 1fr;
  margin: 2px 0 0 5px;
  padding: 3px 0 0 2px;
  background: #333333;
  border-right: 6px solid #ececec;
  box-shadow: inset 2px 3px 0 #202020;
  font-family: var(--mono);
  font-weight: 700;
  font-size: 22px;
  color: #93c9e6;
}

.files-row {
  grid-column: 2;
  display: flex;
  padding-left: 4px;
}

.files-row span {
  width: 90px;
  flex: none;
  text-align: center;
}

.files-top {
  grid-row: 1;
  align-self: end;
  line-height: 35px;
  margin-bottom: -5px;
}

.files-bottom {
  grid-row: 3;
  line-height: 19px;
}

.ranks {
  grid-row: 2;
  display: flex;
  flex-direction: column;
  margin-top: -5px;
}

.ranks span {
  height: 90px;
  line-height: 90px;
}

.ranks-left {
  grid-column: 1;
  text-align: right;
  padding-right: 12px;
}

.ranks-right {
  grid-column: 3;
  margin-left: -4px;
}

.board {
  grid-column: 2;
  grid-row: 2;
  position: relative;
  z-index: 1;
  width: 744px;
  height: 744px;
  padding: 3px 0 0 4px;
  background: #333333;
  border: 9px solid #ffd600;
  border-top-width: 10px;
  border-radius: 3px;
}

.squares {
  width: 721px;
  height: 721px;
  padding: 1px 0 0 1px;
  display: grid;
  grid-template-columns: repeat(8, 90px);
  grid-auto-rows: 90px;
  background: #000000;
}

.squares .w {
  margin: 0 2px 2px 0;
  background: #ffffff;
  box-shadow: inset 0 0 0 1px #a8a8a8;
}

.turtle {
  position: absolute;
  left: -18px;
  top: -13px;
  width: 15px;
  height: 17px;
}

/* windows taskbar */
.taskbar {
  height: 60px;
  flex: none;
  display: flex;
  background: #eeeeee;
  color: #000000;
  border-right: 7px solid #eeeeee;
}

.start {
  width: 73px;
  flex: none;
  display: flex;
  align-items: center;
  justify-content: center;
}

.start svg {
  width: 24px;
  height: 24px;
}

.tb-search {
  width: 430px;
  height: 58px;
  margin-top: 1px;
  flex: none;
  display: flex;
  align-items: center;
  padding-left: 16px;
  background: #ffffff;
  border: 2px solid #c8c8c8;
  font-size: 21.300px;
  color: #222222;
}

.tb-search span {
  padding-top: 2px;
}

.tb-lens {
  width: 24px;
  height: 24px;
  margin-right: 18px;
}

.doodle {
  width: 102px;
  height: 52px;
  margin-left: auto;
  margin-right: 6px;
}

.apps {
  margin-left: 1px;
  display: flex;
}

.app {
  position: relative;
  width: 75px;
  height: 60px;
  display: flex;
  align-items: center;
  justify-content: center;
}

.app svg {
  width: 34px;
  height: 38px;
}

.app.app-plain svg {
  width: 24px;
  height: 24px;
}

.app::after {
  content: "";
  position: absolute;
  left: 7px;
  right: 7px;
  bottom: 0;
  height: 3px;
  background: #2d94c9;
}

.app-plain::after,
.app:nth-child(2)::after,
.app:nth-child(3)::after {
  display: none;
}

.app-active {
  background: #ffffff;
}

.app-active::after {
  left: 0;
  right: 0;
}

.wa-count {
  position: absolute;
  left: 46px;
  top: 29px;
  width: 25px;
  height: 25px;
  border-radius: 50%;
  background: #c8c8c8;
  border: 1px solid #8c8c8c;
  font-size: 16px;
  line-height: 23px;
  text-align: center;
}

.tray {
  margin-left: auto;
  display: flex;
  align-items: center;
  white-space: nowrap;
}

.temp {
  font-size: 20px;
}

.tr-chev {
  width: 20px;
  height: 12px;
  margin-left: 38px;
}

.tr-batt {
  width: 26px;
  height: 22px;
  margin-left: 14px;
}

.tr-vol {
  width: 22px;
  height: 18px;
  margin-left: 10px;
}

.lang {
  font-size: 17px;
  margin-left: 15px;
}

.clock {
  display: flex;
  flex-direction: column;
  align-items: center;
  width: 96px;
  margin-left: 20px;
  font-size: 17.400px;
  line-height: 28px;
}

.tr-note {
  width: 26px;
  height: 24px;
  margin-left: 27px;
  margin-right: 30px;
}
```
